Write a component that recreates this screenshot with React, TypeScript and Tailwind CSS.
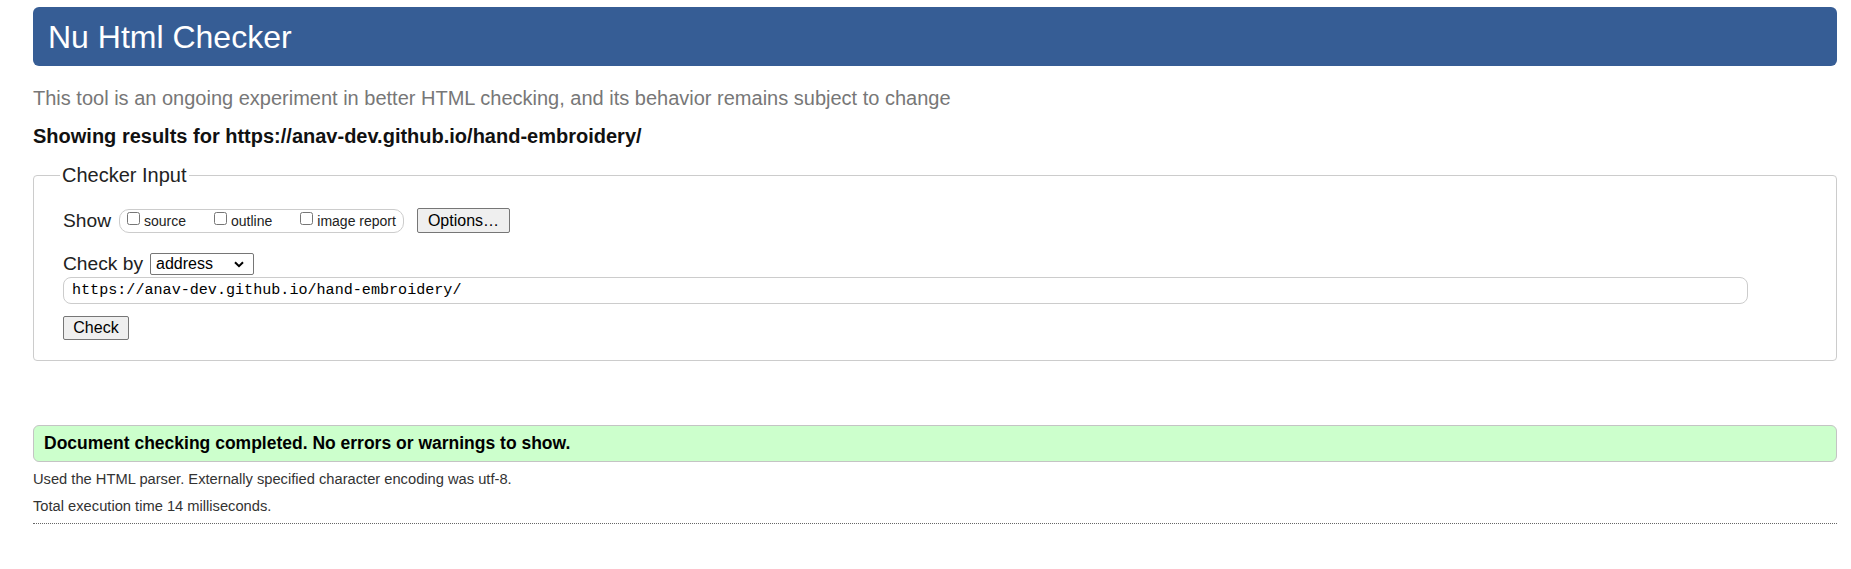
import React from 'react';

const options = ['source', 'outline', 'image report'];

export default function App() {
  return (
    <div className="min-h-[569px] bg-white pt-[7px] pl-[33px] font-['Liberation_Sans',Arial,sans-serif] text-black">
      <div className="w-[1804px]">
        {/* Header */}
        <h1 className="flex h-[59px] items-center rounded-[6px] bg-[#365d95] pl-[15px] text-[32px] text-white">
          Nu Html Checker
        </h1>

        <p className="mt-[20px] text-[20px] leading-[24px] text-[#777]">
          This tool is an ongoing experiment in better HTML checking, and its behavior remains subject to change
        </p>
        <p className="mt-[14px] text-[20px] font-bold leading-[24px] text-[#111]">
          Showing results for https://anav-dev.github.io/hand-embroidery/
        </p>

        {/* Checker Input */}
        <fieldset className="mt-[15px] rounded-[4px] border border-[#ccc] pb-[20px] pl-[29px]">
          <legend className="-ml-[3px] px-[2px] text-[20px] leading-[24px] text-[#222]">Checker Input</legend>

          <div className="mt-[21px] flex h-[25px] items-center">
            <span className="text-[19.2px] leading-[24px] text-[#222]">Show</span>
            <div className="ml-[8px] flex h-[24px] w-[285px] items-center rounded-[10px] border border-[#ccc] pl-[7px]">
              {options.map((opt, i) => (
                <label key={opt} className={`flex items-center ${i > 0 ? 'ml-[28px]' : ''}`}>
                  <input type="checkbox" className="m-0 -mt-[4px] h-[13px] w-[13px]" />
                  <span className="ml-[4px] text-[14px] leading-[16px] text-[#222]">{opt}</span>
                </label>
              ))}
            </div>
            <button className="ml-[13px] h-[25px] w-[93px] rounded-[2px] border border-[#767676] bg-[#efefef] text-[16px] text-black">
              Options…
            </button>
          </div>

          <div className="mt-[20px] flex h-[21px] items-center">
            <span className="text-[19.2px] leading-[24px] text-[#222]">Check by</span>
            <div className="relative ml-[7px] flex h-[22px] w-[104px] items-center rounded-[2px] border border-[#767676] pl-[5px] text-[16px] text-black">
              address
              <svg className="absolute right-[9px] top-[7px]" width="10" height="7" viewBox="0 0 10 7">
                <path d="M1 1.2 L5 5.2 L9 1.2" fill="none" stroke="#000" strokeWidth="2" />
              </svg>
            </div>
          </div>

          <div className="mt-[3px] flex h-[27px] w-[1685px] items-center rounded-[8px] border border-[#ccc] pl-[8px] font-['Liberation_Mono',monospace] text-[15.1px] text-black">
            https://anav-dev.github.io/hand-embroidery/
          </div>

          <button className="mt-[12px] h-[24px] w-[66px] rounded-[2px] border border-[#767676] bg-[#efefef] text-[16px] leading-[20px] text-black">
            Check
          </button>
        </fieldset>

        {/* Result */}
        <div className="mt-[64px] flex h-[37px] items-center rounded-[6px] border border-[#c4c4c4] bg-[#ccffcc] pl-[10px] text-[17.5px] font-bold text-black">
          Document checking completed. No errors or warnings to show.
        </div>

        <p className="mt-[9px] text-[14.7px] leading-[17px] text-[#333]">
          Used the HTML parser. Externally specified character encoding was utf-8.
        </p>
        <p className="mt-[10px] text-[14.7px] leading-[17px] text-[#333]">Total execution time 14 milliseconds.</p>

        <div className="mt-[7.5px] border-t border-dotted border-[#666]" />
      </div>
    </div>
  );
}
